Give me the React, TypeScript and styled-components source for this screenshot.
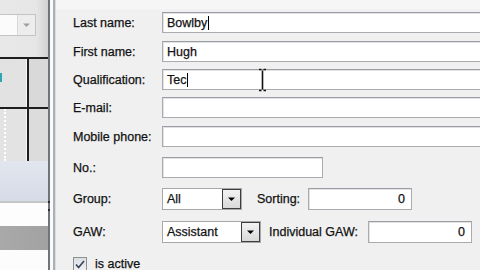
import React from "react";
import styled, { createGlobalStyle } from "styled-components";

const GlobalStyle = createGlobalStyle`
  html, body { margin: 0; padding: 0; width: 480px; height: 270px; overflow: hidden; background: #f0f0f0; }
  #root { width: 480px; height: 270px; }
`;

const Screen = styled.div`
  display: flex;
  width: 480px;
  height: 270px;
  overflow: hidden;
  font-family: "Liberation Sans", Arial, sans-serif;
  font-size: 12.5px;
  color: #121212;
  -webkit-text-stroke: 0.25px #121212;
`;

/* ---------- background window (left) ---------- */
const LeftPane = styled.div`
  width: 48px;
  flex: none;
  display: flex;
  flex-direction: column;
  overflow: hidden;
`;

const TopArea = styled.div`
  height: 57px;
  flex: none;
  box-sizing: border-box;
  padding-top: 14px;
  background: linear-gradient(to right, #e8e8e8 0, #e6e6e6 75%, #d2d2d2 100%);
`;

const MiniCombo = styled.div`
  width: 36px;
  height: 22px;
  box-sizing: border-box;
  display: flex;
  border: 1px solid #c4c4c4;
  border-left: none;
  background: #fbfbfb;
`;

const MiniComboText = styled.div`
  flex: 1;
`;

const MiniComboButton = styled.div`
  width: 17px;
  display: flex;
  align-items: center;
  justify-content: center;
  background: #ededed;
  border-left: 1px solid #d8d8d8;
`;

const GridRow = styled.div<{ $h: number }>`
  height: ${(p) => p.$h}px;
  flex: none;
  display: grid;
  grid-template-columns: 27px 1fr;
  border-top: 2px solid #1e1e1e;
`;

const GridCell = styled.div<{ $bg: string; $dark?: boolean }>`
  background: ${(p) => p.$bg};
  border-left: ${(p) => (p.$dark ? "2px solid #1e1e1e" : "none")};
  border-right: ${(p) => (p.$dark ? "none" : "1px solid #f7f7f7")};
  position: relative;
`;

const TealMark = styled.div`
  position: absolute;
  left: 0;
  top: 14px;
  width: 2px;
  height: 9px;
  background: #2ca6b0;
`;

const DottedLine = styled.div`
  margin-left: 4px;
  width: 0;
  height: 100%;
  border-left: 2px dotted #ffffff;
`;

const Band = styled.div<{ $h: number; $bg: string }>`
  height: ${(p) => p.$h}px;
  flex: none;
  background: ${(p) => p.$bg};
`;

const FillBand = styled.div`
  flex: 1;
  background: #fcfcfc;
`;

const Splitter = styled.div`
  width: 8px;
  flex: none;
  position: relative;
  background: linear-gradient(
    to right,
    #727476 0,
    #727476 2px,
    #fafafa 2px,
    #fafafa 5px,
    #a9b0b9 5px,
    #a9b0b9 7px,
    #dcdcdc 7px
  );
`;

const GripDot = styled.div<{ $top: number }>`
  position: absolute;
  left: 0;
  top: ${(p) => p.$top}px;
  width: 2px;
  height: 2px;
  background: #2a2a2a;
`;

/* ---------- dialog ---------- */
const Dialog = styled.div`
  flex: 1;
  position: relative;
  overflow: hidden;
  box-sizing: border-box;
  padding: 12px 0 0 17px;
  display: flex;
  flex-direction: column;
  background: linear-gradient(#f6f6f6 0, #f6f6f6 9px, #f0f0f0 10px);
`;

const Row = styled.div<{ $mt: number; $h?: number }>`
  display: flex;
  align-items: center;
  flex: none;
  height: ${(p) => p.$h ?? 21}px;
  margin-top: ${(p) => p.$mt}px;
`;

const Label = styled.div`
  width: 89px;
  flex: none;
  white-space: nowrap;
`;

const InlineLabel = styled.div<{ $ml: number; $w: number }>`
  margin-left: ${(p) => p.$ml}px;
  width: ${(p) => p.$w}px;
  flex: none;
  white-space: nowrap;
`;

const TextField = styled.div<{ $w: number; $h?: number; $right?: boolean }>`
  width: ${(p) => p.$w}px;
  height: ${(p) => p.$h ?? 21}px;
  flex: none;
  box-sizing: border-box;
  border: 1px solid #a9abb0;
  border-top-color: #9a9da3;
  background: #ffffff;
  box-shadow: inset 1px 1px 0 #e2e2e2;
  display: flex;
  align-items: center;
  justify-content: ${(p) => (p.$right ? "flex-end" : "flex-start")};
  padding: 0 6px 0 4px;
  white-space: nowrap;
`;

const Caret = styled.span`
  display: inline-block;
  width: 1px;
  height: 14px;
  margin-left: 1px;
  background: #000;
`;

const Combo = styled.div<{ $w: number }>`
  width: ${(p) => p.$w}px;
  height: 22px;
  flex: none;
  box-sizing: border-box;
  border: 1px solid #a8a8a8;
  background: #ffffff;
  display: flex;
  align-items: stretch;
`;

const ComboText = styled.div`
  flex: 1;
  display: flex;
  align-items: center;
  padding-left: 4px;
  white-space: nowrap;
`;

const DropButton = styled.div`
  width: 19px;
  flex: none;
  box-sizing: border-box;
  border: 1px solid #3e3e3e;
  background: linear-gradient(#f2f2f2, #d9d9d9);
  display: flex;
  align-items: center;
  justify-content: center;
`;

const CheckRow = styled.div`
  display: flex;
  align-items: center;
  gap: 8px;
`;

const CheckBox = styled.div`
  width: 14px;
  height: 14px;
  box-sizing: border-box;
  border: 1px solid #8e8f8f;
  background: linear-gradient(#dadfe6, #eef1f4);
  display: flex;
  align-items: center;
  justify-content: center;
`;

const IBeam = styled.svg`
  position: absolute;
  left: 202px;
  top: 68px;
`;

const Arrow = ({ color }: { color: string }) => (
  <svg width="9" height="6" viewBox="0 0 9 6">
    <path d="M1 1.5h7L4.5 5z" fill={color} />
  </svg>
);

export default function App() {
  return (
    <Screen>
      <GlobalStyle />
      <LeftPane>
        <TopArea>
          <MiniCombo>
            <MiniComboText />
            <MiniComboButton>
              <Arrow color="#a0a0a0" />
            </MiniComboButton>
          </MiniCombo>
        </TopArea>
        <GridRow $h={48}>
          <GridCell $bg="#e2e2e2">
            <TealMark />
          </GridCell>
          <GridCell $bg="#d9d9d9" $dark />
        </GridRow>
        <GridRow $h={52}>
          <GridCell $bg="#e3e3e3">
            <DottedLine />
          </GridCell>
          <GridCell $bg="#dcdcdc" $dark />
        </GridRow>
        <Band $h={40} $bg="linear-gradient(#e2e6ee, #d5dbe7)" />
        <Band $h={2} $bg="#c6c6c6" />
        <Band $h={23} $bg="#fdfdfd" />
        <Band $h={24} $bg="linear-gradient(to right, #a9a9a9, #a2a2a2)" />
        <FillBand />
      </LeftPane>
      <Splitter>
        <GripDot $top={201} />
        <GripDot $top={209} />
      </Splitter>
      <Dialog>
        <Row $mt={0}>
          <Label>Last name:</Label>
          <TextField $w={340}>
            Bowlby
            <Caret />
          </TextField>
        </Row>
        <Row $mt={8}>
          <Label>First name:</Label>
          <TextField $w={340}>Hugh</TextField>
        </Row>
        <Row $mt={7}>
          <Label>Qualification:</Label>
          <TextField $w={340}>
            Tec
            <Caret />
          </TextField>
        </Row>
        <Row $mt={7}>
          <Label>E-mail:</Label>
          <TextField $w={340} />
        </Row>
        <Row $mt={8}>
          <Label>Mobile phone:</Label>
          <TextField $w={340} />
        </Row>
        <Row $mt={10}>
          <Label>No.:</Label>
          <TextField $w={161} />
        </Row>
        <Row $mt={9} $h={24}>
          <Label>Group:</Label>
          <Combo $w={80}>
            <ComboText>All</ComboText>
            <DropButton>
              <Arrow color="#000" />
            </DropButton>
          </Combo>
          <InlineLabel $ml={15} $w={51}>
            Sorting:
          </InlineLabel>
          <TextField $w={104} $h={22} $right>
            0
          </TextField>
        </Row>
        <Row $mt={10} $h={22}>
          <Label>GAW:</Label>
          <Combo $w={99}>
            <ComboText>Assistant</ComboText>
            <DropButton>
              <Arrow color="#000" />
            </DropButton>
          </Combo>
          <InlineLabel $ml={8} $w={99}>
            Individual GAW:
          </InlineLabel>
          <TextField $w={104} $h={22} $right>
            0
          </TextField>
        </Row>
        <Row $mt={14} $h={14}>
          <CheckRow>
            <CheckBox>
              <svg width="10" height="9" viewBox="0 0 10 9">
                <path
                  d="M1 4.5l2.6 3L9 1"
                  fill="none"
                  stroke="#3a4250"
                  strokeWidth="1.6"
                />
              </svg>
            </CheckBox>
            is active
          </CheckRow>
        </Row>
        <IBeam width="9" height="24" viewBox="0 0 9 24">
          <path
            d="M1 1.5h2.5M5.5 1.5H8M4.5 2.5v19M1 22.5h2.5M5.5 22.5H8"
            stroke="#111"
            strokeWidth="1.6"
            fill="none"
          />
        </IBeam>
      </Dialog>
    </Screen>
  );
}
